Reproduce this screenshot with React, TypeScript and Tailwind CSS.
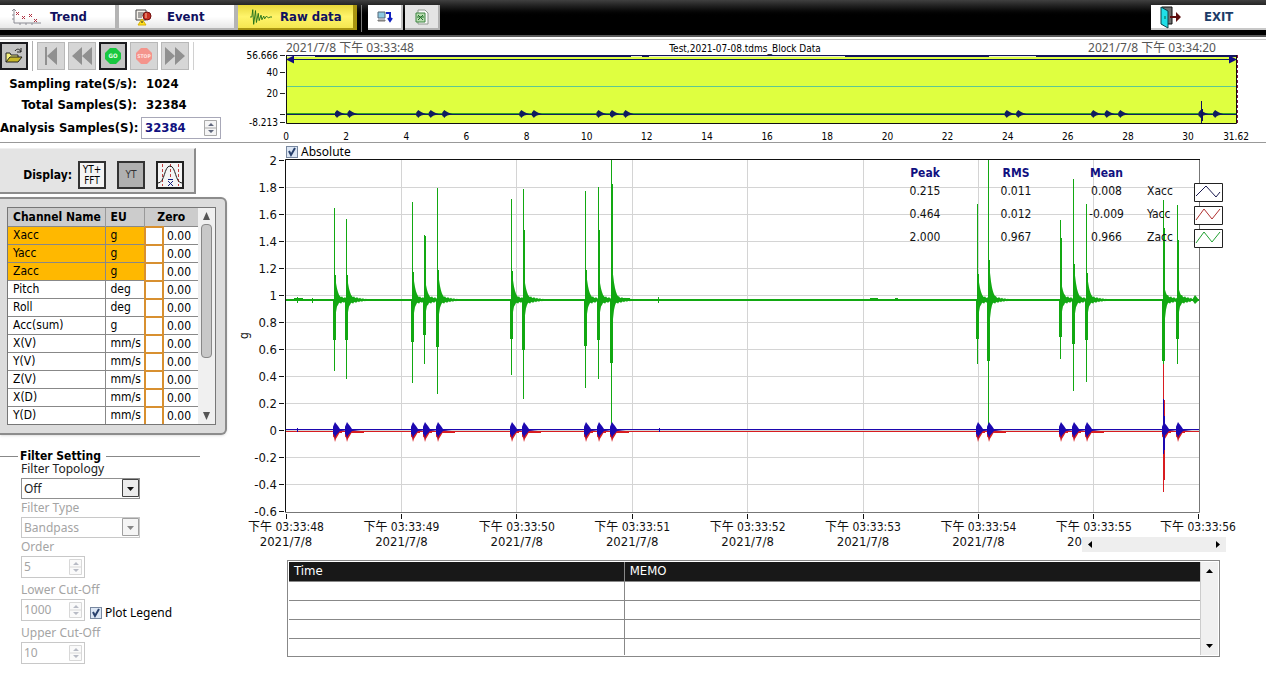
import type { ReactNode } from "react";
import clsx from "clsx";

const CHANNELS = [
  { name: "Xacc", unit: "g", active: true },
  { name: "Yacc", unit: "g", active: true },
  { name: "Zacc", unit: "g", active: true },
  { name: "Pitch", unit: "deg", active: false },
  { name: "Roll", unit: "deg", active: false },
  { name: "Acc(sum)", unit: "g", active: false },
  { name: "X(V)", unit: "mm/s", active: false },
  { name: "Y(V)", unit: "mm/s", active: false },
  { name: "Z(V)", unit: "mm/s", active: false },
  { name: "X(D)", unit: "mm/s", active: false },
  { name: "Y(D)", unit: "mm/s", active: false },
];

const STATS = [
  { name: "Xacc", peak: "0.215", rms: "0.011", mean: "0.008", color: "#1a1a50", points: "2,13 12,3 22,14 26,9" },
  { name: "Yacc", peak: "0.464", rms: "0.012", mean: "-0.009", color: "#b03030", points: "2,14 10,3 18,13 26,3" },
  { name: "Zacc", peak: "2.000", rms: "0.967", mean: "0.966", color: "#20a030", points: "2,14 10,3 18,13 26,3" },
];

// x, spike top, narrow shoulder, body top, body bottom, spike bottom (plot units)
const HITS = [
  [94, 48, 115, 115, 183, 211],
  [106, 59, 115, 115, 183, 219],
  [172, 42, 112, 112, 185, 223],
  [184, 75, 76, 118, 178, 204],
  [197, 28, 110, 110, 190, 234],
  [271, 39, 111, 111, 182, 215],
  [283, 29, 70, 115, 193, 239],
  [345, 31, 110, 110, 189, 228],
  [358, 27, 70, 115, 183, 219],
  [371, 0, 24, 102, 206, 268],
  [737, 44, 114, 114, 182, 204],
  [748, 0, 100, 100, 204, 268],
  [820, 60, 78, 120, 180, 199],
  [833, 19, 104, 104, 187, 231],
  [846, 44, 113, 113, 183, 222],
  [923, 40, 68, 125, 204, 204],
  [937, 45, 80, 125, 182, 204],
];

const LAST_OF_GROUP = [106, 197, 283, 371, 748, 846];

function envelope(x: number, base: number, up: number, down: number, tail: number) {
  const top: string[] = [];
  const bottom: string[] = [];
  for (let i = 0; i <= tail; i++) {
    const ring = i < tail ? 6 * Math.exp(-i / 11) * (i % 3 === 1 ? 1.2 : 0.8) : 0;
    top.push(`${x + i},${base - Math.max(up * Math.exp(-i / 2.6), ring)}`);
    bottom.unshift(`${x - 1 + i},${base + Math.max(down * Math.exp(-i / 1.6), ring)}`);
  }
  return [...top, ...bottom].join(" ");
}

function burst(x: number, base: number, up: number, down: number, length: number) {
  return `${x - 2},${base} ${x - 2},${base - up * 0.4} ${x},${base - up} ${x + 1},${base - up * 0.8} ${x + 3},${base - up * 0.5} ${x + 5},${base - 1} ${x + length},${base} ${x + 5},${base + 1} ${x + 3},${base + down * 0.4} ${x + 1},${base + down * 0.7} ${x},${base + down} ${x - 1},${base + down * 0.6} ${x - 2},${base + down * 0.5}`;
}

function TabButton({
  label,
  icon,
  active,
}: {
  label: string;
  icon: ReactNode;
  active?: boolean;
}) {
  return (
    <button
      className={clsx(
        "flex h-[25px] w-[119px] items-center gap-2 border-r-4 border-b-2 pl-3 text-[13px] font-bold text-[#101060]",
        active
          ? "border-[#a89410] bg-linear-to-b from-[#e8d838] via-[#fff46a] to-[#f4e650]"
          : "border-[#b4b4b4] bg-linear-to-b from-white via-white to-[#e8e8e8]"
      )}
    >
      {icon}
      {label}
    </button>
  );
}

function TrendIcon() {
  return (
    <svg width="30" height="20" viewBox="0 0 30 20" fill="none">
      <path d="M2 2v14h27M0 4l2-2 2 2M0 8h2M0 12h2M8 16v2M14 16v2M20 16v2" stroke="#8c8c94" />
      <path
        d="M4 5l3 3M7 5l-3 3M10 9l3 3M13 9l-3 3M17 7l3 3M20 7l-3 3M22 12l3 3M25 12l-3 3"
        stroke="#b03040"
      />
    </svg>
  );
}

function EventIcon() {
  return (
    <svg width="24" height="20" viewBox="0 0 24 20" fill="none" className="ml-1">
      <path d="M1 3h10v10H1z" fill="#f4f0ea" stroke="#444" />
      <path d="M3 6h6M3 8h5M3 10h4" stroke="#555" />
      <circle cx="12" cy="9" r="4" fill="#c83020" stroke="#701010" />
      <path d="M11 6v5" stroke="#f4c0a0" />
      <path d="M7 12l4 6H3z" fill="#ffe020" stroke="#d8b000" />
      <path d="M7 14v2" stroke="#222" />
    </svg>
  );
}

function WaveIcon() {
  return (
    <svg width="22" height="20" viewBox="0 0 24 20" fill="none" stroke="#207018">
      <path d="M0 10h2l1-8 1 16 2-15 1 13 2-10 1 8 2-6 1 5 2-4 1 3 2-3 2 2 2-1h3" />
    </svg>
  );
}

function ToolButton({
  label,
  dark,
  children,
}: {
  label: string;
  dark?: boolean;
  children: ReactNode;
}) {
  return (
    <button
      aria-label={label}
      className={clsx(
        "flex h-7 w-7 items-center justify-center",
        dark ? "border-2 border-[#1c1c20] bg-[#c4c4c4]" : "border border-[#b8b8b8] bg-[#d6d6d6]"
      )}
    >
      {children}
    </button>
  );
}

function Header() {
  return (
    <header className="flex h-[37px] items-start border-b-2 border-[#5a5a5a] bg-linear-to-b from-[#404040] via-black via-50% to-black pt-[5px]">
      <nav className="flex">
        <TabButton label="Trend" icon={<TrendIcon />} />
        <TabButton label="Event" icon={<EventIcon />} />
        <TabButton label="Raw data" icon={<WaveIcon />} active />
      </nav>
      <div className="ml-1 h-[27px] w-px bg-[#777]" />
      <div className="ml-[6px] flex gap-[2px]">
        <button
          aria-label="Transfer"
          className="flex h-[25px] w-[35px] items-center justify-center border-r-2 border-b-2 border-[#c0c0c0] bg-white"
        >
          <svg width="18" height="16" viewBox="0 0 18 16" fill="none">
            <path d="M2 3h7v6H2z" fill="#8cc8e0" stroke="#567" />
            <path d="M2 11h7v1H2z" fill="#a8a8a8" stroke="#777" />
            <path d="M10 4h4v7M12 9l2 3 2-3" stroke="#1020c0" strokeWidth="2" />
          </svg>
        </button>
        <button
          aria-label="Excel"
          className="flex h-[25px] w-[35px] items-center justify-center border-r-2 border-b-2 border-[#b0b0b0] bg-[#e4e4e4]"
        >
          <svg width="14" height="16" viewBox="0 0 14 16" fill="none">
            <path d="M3 1h7l3 3v11H3z" fill="#fafafa" stroke="#909890" />
            <path d="M1 4h9v9H1z" fill="#b8dcb0" stroke="#3c8440" />
            <path d="M3 6l5 5M8 6l-5 5M2 8h7" stroke="#207028" />
          </svg>
        </button>
      </div>
      <button className="ml-auto flex h-[25px] w-[115px] items-center gap-5 border-b-2 border-[#c8c8c8] bg-white pl-2 text-[13px] font-bold text-[#1c3c68]">
        <svg width="25" height="24" viewBox="0 0 25 24" fill="none">
          <path d="M3 2h10v17H3z" fill="#707070" stroke="#111" />
          <path d="M2 2l7 4v17l-7-4z" fill="#20e0e8" stroke="#0c4048" />
          <path d="M6 11v3" stroke="#064" />
          <path d="M11 11h6V7l5 5-5 5v-4h-6z" fill="#601010" />
        </svg>
        EXIT
      </button>
    </header>
  );
}

function PlayerBar() {
  return (
    <div className="flex h-[30px] items-center">
      <ToolButton label="Open" dark>
        <svg width="20" height="18" viewBox="0 0 20 18" fill="none">
          <path d="M2 15V6h4l1 2h7v3" fill="#f4f080" stroke="#222" />
          <path d="M2 15l4-5h12l-4 5z" fill="#c8b828" stroke="#222" />
          <path d="M11 4c2-3 5-2 6 1M17 1v4h-4" stroke="#222" />
        </svg>
      </ToolButton>
      <div className="mx-1 h-[30px] w-px bg-[#b0b0b0]" />
      <div className="flex gap-[3px] border-r border-[#d0d0d0] pr-1">
        <ToolButton label="First">
          <svg width="20" height="20" viewBox="0 0 20 20" fill="#909090">
            <path d="M4 1h2v18H4zM16 1v18L6 10z" />
          </svg>
        </ToolButton>
        <ToolButton label="Back">
          <svg width="22" height="20" viewBox="0 0 22 20" fill="#909090">
            <path d="M11 1v18L1 10zM21 1v18L11 10z" />
          </svg>
        </ToolButton>
        <ToolButton label="Run" dark>
          <svg width="18" height="18" viewBox="0 0 18 18">
            <path d="M6 1h6l5 5v6l-5 5H6l-5-5V6z" fill="#18c840" />
            <text x="9" y="11" textAnchor="middle" fontSize="6" fill="#e8ffe8" fontWeight="bold">
              GO
            </text>
          </svg>
        </ToolButton>
        <ToolButton label="Halt">
          <svg width="18" height="18" viewBox="0 0 18 18">
            <path d="M6 1h6l5 5v6l-5 5H6l-5-5V6z" fill="#f4948c" />
            <text x="9" y="11" textAnchor="middle" fontSize="5" fill="#ffe4e0" fontWeight="bold">
              STOP
            </text>
          </svg>
        </ToolButton>
        <ToolButton label="Forward">
          <svg width="22" height="20" viewBox="0 0 22 20" fill="#909090">
            <path d="M1 1v18l10-9zM11 1v18l10-9z" />
          </svg>
        </ToolButton>
      </div>
    </div>
  );
}

function Spinner({ faded }: { faded?: boolean }) {
  return (
    <svg
      width="13"
      height="16"
      viewBox="0 0 13 16"
      className={clsx("shrink-0", faded ? "opacity-40" : "opacity-90")}
    >
      <path d="M.5.5h12v15H.5zM.5 8h12" fill="#f4f4f4" stroke="#a0a0a0" />
      <path d="M4 6l3-3 3 3zM4 10l3 3 3-3z" fill="#505870" />
    </svg>
  );
}

function SampleInfo() {
  return (
    <section className="w-60 shrink-0 pt-px">
      <PlayerBar />
      <dl className="grid grid-cols-[137px_1fr] gap-x-[9px] pt-[2px] text-[13px] leading-[21px] font-bold">
        <dt className="text-right whitespace-nowrap">Sampling rate(S/s):</dt>
        <dd>1024</dd>
        <dt className="text-right whitespace-nowrap">Total Samples(S):</dt>
        <dd>32384</dd>
      </dl>
      <div className="flex items-center gap-1 pt-[2px] text-[13px] font-bold">
        <label htmlFor="analysis" className="w-[137px] text-right whitespace-nowrap">
          Analysis Samples(S):
        </label>
        <div className="flex h-[22px] w-20 items-center border border-[#a8a8b8] px-[3px]">
          <input
            id="analysis"
            defaultValue="32384"
            className="min-w-0 flex-1 font-bold text-[#101080] outline-none"
          />
          <Spinner />
        </div>
      </div>
    </section>
  );
}

function OverviewChart() {
  const toX = (x: number) => 46 + ((x - 46) * 951) / 913;
  const ticks = Array.from({ length: 16 }, (_, i) => i * 2);
  return (
    <svg viewBox="0 0 1026 102" className="block w-full min-w-0 flex-1 overflow-visible">
      <g fontSize="12" fill="#555" className="font-['Noto_Sans','Noto_Sans_CJK_TC',sans-serif]">
        <text x="46" y="12">
          2021/7/8 下午 03:33:48
        </text>
        <text x="976" y="12" textAnchor="end">
          2021/7/8 下午 03:34:20
        </text>
      </g>
      <text x="505" y="12" textAnchor="middle" fontSize="10">
        Test,2021-07-08.tdms_Block Data
      </text>
      <rect x="46" y="15" width="951" height="69" fill="#dfff40" />
      <path d="M46 46.500h951" stroke="#60c890" />
      <path d="M46 73.500h951" stroke="#30a020" />
      <path d="M46 74.500h951" stroke="#102060" />
      <path d="M46 16h951" stroke="#14145c" strokeWidth="2" />
      <path d="M47 16.500h28M391 16.500h11M409 16.500h196M749 16.500h47" stroke="#e8ecd0" />
      <path d="M46 19.500h951" stroke="#102060" />
      <path d="M46 19.500l8-4v8zM997 19.500l-8-4v8z" fill="#100c80" />
      {HITS.map(([x]) => (
        <polygon key={x} points={burst(toX(x) + 1, 74, 4, 4, 8)} fill="#101c60" />
      ))}
      <path d="M961.500 61v22M962.500 69v12" stroke="#101060" />
      <path d="M46.500 15v68.500h950V15" fill="none" stroke="#111" />
      <path d="M997.500 15v69" stroke="#80104c" strokeDasharray="3 2" />
      <path d="M40 15.500h5M40 32.500h5M40 53.500h5M40 74.500h5M40 82.500h5" stroke="#222" />
      <g fontSize="10" textAnchor="end">
        <text x="38" y="19">56.666</text>
        <text x="38" y="36">40</text>
        <text x="38" y="57">20</text>
        <text x="38" y="86">-8.213</text>
      </g>
      <g fontSize="10" textAnchor="middle">
        {ticks.map((t) => (
          <text key={t} x={46 + t * 30.07} y="100">
            {t}
          </text>
        ))}
        <text x="996" y="100">31.62</text>
      </g>
    </svg>
  );
}

function DisplayPanel() {
  return (
    <section className="mt-[5px] flex h-[46px] w-[196px] items-center border-t border-r-2 border-b-2 border-t-[#f0f0f0] border-r-[#8c8c8c] border-b-[#8c8c8c] bg-[#e4e4e4] pt-2">
      <span className="w-[72px] text-right text-[12px] font-bold">Display:</span>
      <button className="ml-[6px] h-7 w-7 border-2 border-[#333] bg-[#f4f4f4] text-[10px] leading-[11px]">
        YT+
        <br />
        FFT
      </button>
      <button className="ml-[11px] h-7 w-7 border-2 border-[#333] bg-[#b0b0b0] text-[10px] text-[#333]">
        YT
      </button>
      <button
        aria-label="Distribution"
        className="ml-[11px] flex h-7 w-7 items-center justify-center border-2 border-[#222] bg-[#f4f4f4]"
      >
        <svg width="24" height="24" viewBox="0 0 24 24" fill="none">
          <path d="M4.500 1v22M12.500 1v13M20.500 1v22" stroke="#c04040" strokeDasharray="3 2" />
          <path d="M0 20c7 0 6-17 12-17s5 17 12 17" stroke="#222" />
          <path d="M10 18l5 5M15 18l-5 5M10 16.500h5" stroke="#142080" />
        </svg>
      </button>
    </section>
  );
}

function ChannelPanel() {
  return (
    <section className="mt-[3px] w-[227px] rounded-r-md border-t-2 border-r-2 border-b-2 border-[#8c8c8c] bg-[#dcdcdc] py-2 pl-[7px] shadow-sm">
      <div className="flex w-[209px] border border-[#777] bg-[#f0f0f0]">
        <table className="w-[190px] table-fixed border-collapse text-[12px] leading-4">
          <colgroup>
            <col className="w-[97px]" />
            <col className="w-[39px]" />
            <col className="w-5" />
            <col />
          </colgroup>
          <thead>
            <tr className="h-[18px] bg-[#cccccc] text-left">
              <th className="border-r border-[#999] pl-[5px] whitespace-nowrap">Channel Name</th>
              <th className="border-r border-[#999] pl-[5px]">EU</th>
              <th colSpan={2} className="text-center">
                Zero
              </th>
            </tr>
          </thead>
          <tbody>
            {CHANNELS.map((channel) => (
              <tr key={channel.name} className="h-[18px]">
                <td
                  className={clsx(
                    "border-t border-r border-[#888] p-0 pl-[5px]",
                    channel.active ? "bg-[#ffb800]" : "bg-white"
                  )}
                >
                  {channel.name}
                </td>
                <td
                  className={clsx(
                    "border-t border-[#888] p-0 pl-[5px]",
                    channel.active ? "bg-[#ffb800]" : "bg-white"
                  )}
                >
                  {channel.unit}
                </td>
                <td className="p-0">
                  <button
                    aria-label={`Zero ${channel.name}`}
                    className="block h-[18px] w-full border-2 border-b-0 border-[#d89030] bg-white"
                  />
                </td>
                <td className="border-t border-[#888] bg-white p-0">
                  <input
                    aria-label={`${channel.name} offset`}
                    defaultValue="0.00"
                    className="block h-[17px] w-full pt-px pr-1 text-center outline-none"
                  />
                </td>
              </tr>
            ))}
          </tbody>
        </table>
        <div className="flex flex-1 flex-col items-center justify-between py-1">
          <svg width="9" height="8" viewBox="0 0 9 8" fill="#555">
            <path d="M4.500 0L8 8H1z" />
          </svg>
          <div className="mt-1 mb-auto h-[134px] w-[11px] rounded border border-[#888] bg-[#c8c8c8]" />
          <svg width="9" height="8" viewBox="0 0 9 8" fill="#555">
            <path d="M4.500 8L8 0H1z" />
          </svg>
        </div>
      </div>
    </section>
  );
}

function SelectField({
  id,
  label,
  value,
  disabled,
}: {
  id: string;
  label: string;
  value: string;
  disabled?: boolean;
}) {
  return (
    <div className={disabled ? "text-[#a4a4a4]" : "text-[#222]"}>
      <label htmlFor={id} className="block h-[18px] leading-[18px]">
        {label}
      </label>
      <div
        className={clsx(
          "relative h-[21px] w-[119px] border",
          disabled ? "border-[#c8c8c8]" : "border-[#909090]"
        )}
      >
        <select
          id={id}
          disabled={disabled}
          className="block h-full w-full appearance-none pl-[2px] leading-[18px] opacity-100 outline-none"
        >
          <option>{value}</option>
        </select>
        <svg
          width="17"
          height="18"
          viewBox="0 0 17 18"
          className={clsx("pointer-events-none absolute top-0 right-0", disabled && "opacity-50")}
        >
          <path d="M.5.5h16v17H.5z" fill="#ececec" stroke="#444" />
          <path d="M5 8h7l-3.500 4z" fill="#111" />
        </svg>
      </div>
    </div>
  );
}

function NumberField({ id, label, value }: { id: string; label: string; value: string }) {
  return (
    <div className="text-[#a4a4a4]">
      <label htmlFor={id} className="block h-[18px] leading-[18px]">
        {label}
      </label>
      <div className="flex h-[22px] w-16 items-center border border-[#c8c8c8] px-[2px]">
        <input id={id} disabled defaultValue={value} className="min-w-0 flex-1" />
        <Spinner faded />
      </div>
    </div>
  );
}

function CheckField({ id, label }: { id: string; label: string }) {
  return (
    <div className="flex items-center gap-[3px] text-[12px]">
      <span className="relative flex h-3 w-3">
        <input
          id={id}
          type="checkbox"
          defaultChecked
          className="h-3 w-3 appearance-none border border-[#7888a0] bg-[#dce6f4]"
        />
        <svg
          width="12"
          height="12"
          viewBox="0 0 12 12"
          fill="none"
          className="pointer-events-none absolute inset-0"
        >
          <path d="M3 5l2 4 4-7" stroke="#28406c" strokeWidth="2" />
        </svg>
      </span>
      <label htmlFor={id} className="leading-4 whitespace-nowrap">
        {label}
      </label>
    </div>
  );
}

function FilterPanel() {
  return (
    <section className="mt-[14px] w-[200px]">
      <div className="flex h-[14px] items-center">
        <div className="h-px w-[18px] bg-[#888]" />
        <h2 className="px-[2px] text-[12px] leading-[14px] font-bold">Filter Setting</h2>
        <div className="ml-[3px] h-px flex-1 bg-[#888]" />
      </div>
      <div className="-mt-[3px] flex flex-col pl-[21px] font-['Noto_Sans',sans-serif] text-[12px]">
        <SelectField id="topology" label="Filter Topology" value="Off" />
        <SelectField id="type" label="Filter Type" value="Bandpass" disabled />
        <div className="flex flex-col gap-[3px]">
          <NumberField id="order" label="Order" value="5" />
          <NumberField id="lower" label="Lower Cut-Off" value="1000" />
          <NumberField id="upper" label="Upper Cut-Off" value="10" />
        </div>
      </div>
    </section>
  );
}

function MainChart() {
  const levels = Array.from({ length: 14 }, (_, i) => i);
  const seconds = Array.from({ length: 9 }, (_, i) => i);
  const tickX = (i: number) => Math.min(46 + i * 115.4, 958);
  return (
    <svg viewBox="0 0 1026 395" className="block w-full overflow-visible">
      <g stroke="#d4d4d4">
        {levels.slice(1, 13).map((i) => (
          <path key={i} d={`M46 ${Math.floor(i * 27.05) + 0.5}h913`} />
        ))}
        {seconds.slice(1, 8).map((i) => (
          <path key={i} d={`M${Math.floor(tickX(i)) + 0.5} 0v352`} />
        ))}
      </g>

      <g fill="#12a812" stroke="none">
        <rect x="46" y="139" width="913" height="2" />
        {HITS.map(([x, top, shoulder, bodyTop, bodyBottom, bottom]) => (
          <g key={x}>
            <rect x={x} y={top} width="1" height={bottom - top} />
            <rect x={x} y={shoulder} width="2" height={140 - shoulder} />
            <rect x={x - 1} y="140" width="3" height={bodyBottom - 143} />
            <polygon
              points={envelope(
                x + 1,
                140,
                140 - bodyTop,
                bodyBottom - 140,
                LAST_OF_GROUP.includes(x) ? 30 : 15
              )}
            />
          </g>
        ))}
        <path d="M952 140l3-5 4 5-4 4z" />
        <path d="M54 138h9v1h-9zM57 137h1v6h-1zM72 138h1v5h-1zM380 138h10v1h-10zM418 137h1v6h-1zM630 138h8v1h-8zM655 138h3v1h-3z" />
      </g>

      <g fill="#d81c20">
        <rect x="46" y="271" width="913" height="1" />
        {HITS.map(([x]) => (
          <g key={x}>
            <polygon points={burst(x + 1, 271, 3, 11, 10)} />
            <rect x={x} y="271" width={LAST_OF_GROUP.includes(x) ? 18 : 8} height="2" />
          </g>
        ))}
        <rect x="923" y="204" width="1" height="128" />
        <rect x="923" y="240" width="2" height="80" />
      </g>
      <g fill="#1c08b0">
        <rect x="46" y="269" width="913" height="1" />
        {HITS.map(([x]) => (
          <polygon key={x} points={burst(x + 1, 270, 8, 8, 14)} />
        ))}
        <rect x="923" y="239" width="1" height="55" />
        <rect x="924" y="256" width="1" height="34" />
        <path d="M57 268h1v4h-1zM419 268h1v4h-1z" />
      </g>

      <path d="M959.500 0v352.500H46" fill="none" stroke="#777" />
      <path d="M960 -.5H45.500v353" fill="none" stroke="#111" />

      <g fontSize="13" textAnchor="end" fill="#111">
        {levels.map((i) => (
          <text key={i} x="37" y={Math.floor(i * 27.05) + 5}>
            {Number((2 - i * 0.2).toFixed(1))}
          </text>
        ))}
      </g>
      <g stroke="#111">
        {levels.map((i) => (
          <path key={i} d={`M39 ${Math.floor(i * 27.05) + 0.5}h5`} />
        ))}
        {seconds.map((i) => (
          <path key={i} d={`M${Math.floor(tickX(i)) + 0.5} 354v5`} />
        ))}
      </g>
      <g textAnchor="middle" fill="#111">
        {seconds.map((i) => (
          <text key={i} x={tickX(i)} y="371" fontSize="12">
            下午 03:33:{48 + i}
          </text>
        ))}
        {seconds.slice(0, 7).map((i) => (
          <text key={i} x={tickX(i)} y="386" fontSize="13">
            2021/7/8
          </text>
        ))}
      </g>
      <text x="827" y="386" fontSize="13" fill="#111">
        20
      </text>
      <text transform="translate(8 179) rotate(-90)" fontSize="12" fill="#111">
        g
      </text>
    </svg>
  );
}

function StatsOverlay() {
  return (
    <table className="absolute top-1 right-[43px] w-[343px] table-fixed text-center text-[12px] leading-4 text-[#111]">
      <thead>
        <tr className="h-[17px] text-[#101080]">
          <th className="w-[90px] p-0">Peak</th>
          <th className="w-[92px] p-0">RMS</th>
          <th className="w-[85px] p-0 pl-1">Mean</th>
          <th className="w-[47px] p-0" />
          <th className="p-0" />
        </tr>
      </thead>
      <tbody>
        {STATS.map((row) => (
          <tr key={row.name} className="h-[23px]">
            <td className="p-0 pb-[3px]">{row.peak}</td>
            <td className="p-0 pb-[3px]">{row.rms}</td>
            <td className="p-0 pb-[3px] pl-1">{row.mean}</td>
            <td className="p-0 pb-[3px] text-left">{row.name}</td>
            <td className="p-0">
              <svg
                viewBox="0 0 29 19"
                className="block h-[19px] w-[29px] bg-white"
                fill="none"
                stroke="#222"
              >
                <path d="M.5.5h28v18H.5z" />
                <polyline points={row.points} stroke={row.color} />
              </svg>
            </td>
          </tr>
        ))}
      </tbody>
    </table>
  );
}

function MemoTable() {
  return (
    <div className="mt-[5px] mr-[46px] ml-[47px] flex border border-[#888] p-px">
      <table className="min-w-0 flex-1 table-fixed border-collapse text-left text-[13px]">
        <thead>
          <tr className="h-[19px] bg-[#181818] leading-4 text-white">
            <th className="w-[36.8%] border-r border-[#888] p-0 pl-[5px] font-normal">Time</th>
            <th className="p-0 pl-[5px] font-normal">MEMO</th>
          </tr>
        </thead>
        <tbody>
          {[0, 1, 2, 3].map((row) => (
            <tr key={row} className="h-[19px] border-t border-[#888] last:h-[17px]">
              <td className="border-r border-[#888] p-0" />
              <td className="p-0" />
            </tr>
          ))}
        </tbody>
      </table>
      <div className="flex w-[18px] flex-col items-center justify-between border-l border-[#ccc] bg-[#f0f0f0] py-[7px]">
        <svg width="7" height="4" viewBox="0 0 7 4">
          <path d="M0 4l3.500-4L7 4z" />
        </svg>
        <svg width="7" height="4" viewBox="0 0 7 4">
          <path d="M0 0l3.500 4L7 0z" />
        </svg>
      </div>
    </div>
  );
}

export default function App() {
  return (
    <div className="bg-white font-['DejaVu_Sans_Condensed','Noto_Sans_CJK_TC',sans-serif] text-black">
      <Header />
      <main className="mt-[2px] border-t border-[#c8c8c8]">
        <div className="flex h-[103px] border-b border-[#999]">
          <SampleInfo />
          <OverviewChart />
        </div>
        <div className="flex">
          <aside className="relative w-60 shrink-0">
            <DisplayPanel />
            <ChannelPanel />
            <FilterPanel />
            <div className="absolute bottom-[43px] left-[90px] font-['Noto_Sans',sans-serif]">
              <CheckField id="legend" label="Plot Legend" />
            </div>
          </aside>
          <section className="min-w-0 flex-1">
            <div className="pt-px pl-[46px] font-['Noto_Sans',sans-serif]">
              <CheckField id="absolute" label="Absolute" />
            </div>
            <div className="relative">
              <MainChart />
              <StatsOverlay />
              <div className="absolute right-10 bottom-[3px] flex h-[15px] w-36 items-center justify-between bg-[#eeeeee] px-[6px]">
                <svg width="4" height="7" viewBox="0 0 4 7">
                  <path d="M4 0v7L0 3.500z" />
                </svg>
                <svg width="4" height="7" viewBox="0 0 4 7">
                  <path d="M0 0v7l4-3.500z" />
                </svg>
              </div>
            </div>
            <MemoTable />
          </section>
        </div>
      </main>
    </div>
  );
}
